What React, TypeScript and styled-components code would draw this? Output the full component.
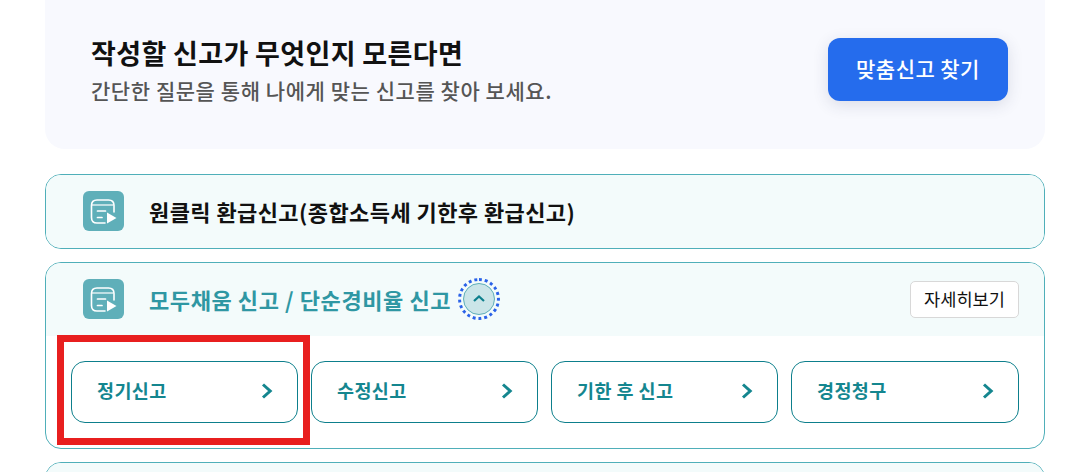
import { createGlobalStyle, styled } from "styled-components";

const GlobalStyle = createGlobalStyle`
  html, body {
    margin: 0;
    padding: 0;
    height: 472px;
    overflow: hidden;
    background: #fff;
    font-family: "Noto Sans CJK KR", "Noto Sans", sans-serif;
  }
`;

const links = ["정기신고", "수정신고", "기한 후 신고", "경정청구"];

function ReportIcon() {
  return (
    <IconBox>
      <svg width="41" height="40" viewBox="0 0 41 40" fill="none">
        <path
          d="M22 32H14C10.5 32 8.5 30 8.5 26.5V14.5C8.5 11 10.5 9 14 9H25.5C29 9 31 11 31 14.5V21"
          stroke="#fff"
          strokeWidth="1.6"
          strokeLinecap="round"
        />
        <path d="M9 14H30.5" stroke="#fff" strokeWidth="1.2" />
        <path d="M14.5 20H22.5M14.5 26.5H19" stroke="#fff" strokeWidth="1.7" strokeLinecap="round" />
        <path d="M24 21.5L33.5 27L24 32.5Z" fill="#fff" />
      </svg>
    </IconBox>
  );
}

export default function App() {
  return (
    <>
      <GlobalStyle />
      <Page>
        <Banner>
          <div>
            <BannerTitle>작성할 신고가 무엇인지 모른다면</BannerTitle>
            <BannerText>간단한 질문을 통해 나에게 맞는 신고를 찾아 보세요.</BannerText>
          </div>
          <FindButton>맞춤신고 찾기</FindButton>
        </Banner>

        <Card>
          <CardHeader>
            <ReportIcon />
            <CardTitle>원클릭 환급신고(종합소득세 기한후 환급신고)</CardTitle>
          </CardHeader>
        </Card>

        <Card>
          <CardHeader>
            <ReportIcon />
            <CardTitle $active>모두채움 신고 / 단순경비율 신고</CardTitle>
            <Toggle>
              <svg width="14" height="9" viewBox="0 0 14 9" fill="none">
                <path d="M2 7L7 2.4L12 7" stroke="#0d7f8c" strokeWidth="2.2" />
              </svg>
            </Toggle>
            <DetailButton>자세히보기</DetailButton>
          </CardHeader>
          <LinkRow>
            {links.map((label) => (
              <LinkButton key={label}>
                <span>{label}</span>
                <svg width="12" height="16" viewBox="0 0 12 16" fill="none">
                  <path d="M2 1.5L9.2 8L2 14.5" stroke="#14868f" strokeWidth="3" />
                </svg>
              </LinkButton>
            ))}
          </LinkRow>
          <Highlight />
        </Card>

        <Card>
          <CardHeader />
        </Card>
      </Page>
    </>
  );
}

const Page = styled.div`
  width: 1000px;
  margin-left: 45px;
  display: flex;
  flex-direction: column;
  gap: 13px;
`;

const Banner = styled.section`
  box-sizing: border-box;
  height: 149px;
  margin-bottom: 12px;
  padding: 0 37px 9px 46px;
  display: flex;
  align-items: center;
  justify-content: space-between;
  background: #f8f9fe;
  border-radius: 0 0 20px 20px;
`;

const BannerTitle = styled.h2`
  margin: 0;
  font-size: 27px;
  line-height: 34px;
  font-weight: 700;
  letter-spacing: 0.35px;
  color: #111;
`;

const BannerText = styled.p`
  margin: 5px 0 0;
  font-size: 21px;
  line-height: 30px;
  font-weight: 500;
  letter-spacing: 0.55px;
  color: #555;
`;

const FindButton = styled.button`
  width: 180px;
  height: 63px;
  margin-bottom: 2px;
  padding: 0 0 3px;
  border: 0;
  border-radius: 12px;
  background: #256ced;
  color: #fff;
  font-family: inherit;
  font-size: 21px;
  font-weight: 500;
  letter-spacing: 0.45px;
  box-shadow: 0 4px 16px rgba(40, 50, 90, 0.14);
`;

const Card = styled.section`
  position: relative;
  box-sizing: border-box;
  border: 1px solid #4fafb9;
  border-radius: 16px;
`;

const CardHeader = styled.div`
  box-sizing: border-box;
  height: 73px;
  padding: 0 25px 2px 37px;
  display: flex;
  align-items: center;
  background: #f3fbfb;
  border-radius: 15px 15px 0 0;
  &:only-child {
    border-radius: 15px;
  }
`;

const IconBox = styled.span`
  flex: none;
  width: 41px;
  height: 40px;
  display: flex;
  background: #5fafb9;
  border-radius: 6px;
`;

const CardTitle = styled.h3<{ $active?: boolean }>`
  margin: 0 0 0 25px;
  font-size: 22px;
  font-weight: 700;
  letter-spacing: ${({ $active }) => ($active ? "0.58px" : "0.42px")};
  color: ${({ $active }) => ($active ? "#2f97a3" : "#111")};
`;

const Toggle = styled.span`
  box-sizing: border-box;
  width: 32px;
  height: 32px;
  margin-left: 12px;
  display: flex;
  align-items: center;
  justify-content: center;
  border: 1px solid #5fafb9;
  border-radius: 50%;
  background: #cbe5e8;
  outline: 3px dotted #2a62e8;
  outline-offset: 2px;
`;

const DetailButton = styled.button`
  box-sizing: border-box;
  width: 109px;
  height: 37px;
  margin: 2px 0 0 auto;
  padding: 0 0 3px;
  border: 1px solid #d8d8d8;
  border-radius: 5px;
  background: #fff;
  color: #111;
  font-family: inherit;
  font-size: 17.6px;
  font-weight: 400;
`;

const LinkRow = styled.div`
  padding: 25px;
  display: grid;
  grid-template-columns: repeat(3, 227px) 228px;
  gap: 13px;
`;

const LinkButton = styled.button`
  box-sizing: border-box;
  height: 62px;
  padding: 0 24px 0 25px;
  display: flex;
  align-items: center;
  justify-content: space-between;
  border: 1px solid #0d7f8c;
  border-radius: 14px;
  background: #fff;
  color: #14868f;
  font-family: inherit;
  font-size: 18.5px;
  font-weight: 700;
  letter-spacing: 0.4px;
  & > span {
    margin-bottom: 4px;
  }
  & > svg {
    margin-bottom: 2px;
  }
`;

const Highlight = styled.div`
  position: absolute;
  left: 11px;
  top: 72px;
  width: 253px;
  height: 110px;
  box-sizing: border-box;
  border: 7px solid #e81f1f;
  pointer-events: none;
`;
